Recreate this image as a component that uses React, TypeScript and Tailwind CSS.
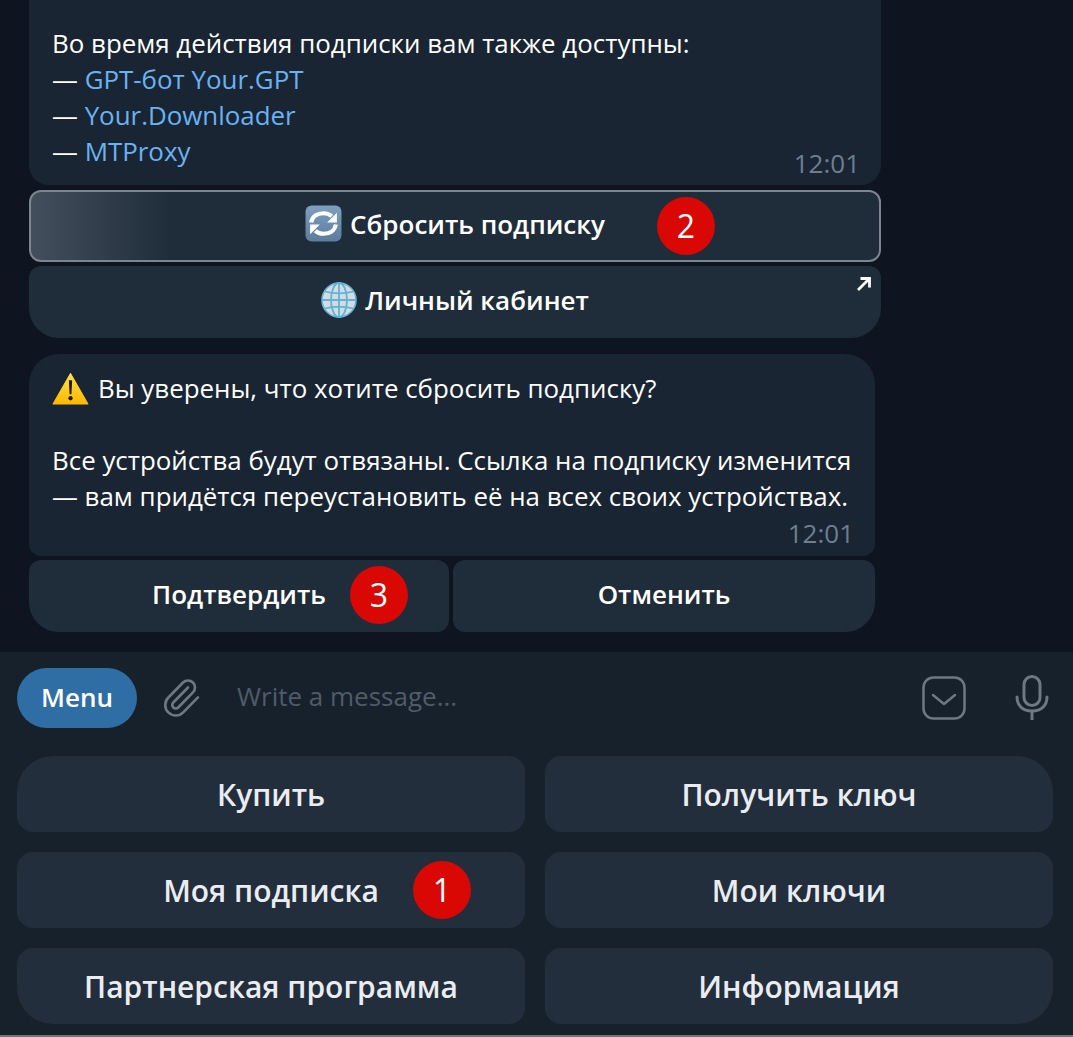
import { Paperclip } from 'lucide-react'

const keyboardRows = [
  ['Купить', 'Получить ключ'],
  ['Моя подписка', 'Мои ключи'],
  ['Партнерская программа', 'Информация'],
]

function Badge({ value, className }: { value: number; className: string }) {
  return (
    <span className={`absolute w-[58px] h-[58px] rounded-full bg-[#d90805] text-white text-[32px] font-normal leading-none flex items-center justify-center ${className}`}>
      {value}
    </span>
  )
}

function RefreshEmoji() {
  return (
    <svg viewBox="0 0 36 36" className="w-[37px] h-[37px] shrink-0">
      <defs>
        <linearGradient id="refreshBg" x1="0" y1="0" x2="0" y2="1">
          <stop offset="0" stopColor="#7f9fbe" />
          <stop offset="1" stopColor="#5a7c9d" />
        </linearGradient>
      </defs>
      <rect x="0.5" y="0.5" width="35" height="35" rx="6" fill="url(#refreshBg)" />
      <path d="M6 17c1-6 6-9 12-9 3 0 6 1 8 3" fill="none" stroke="#fff" strokeWidth="4" />
      <path d="M31 7.500v9.500h-9.500z" fill="#fff" />
      <path d="M30 19c-1 6-6 9-12 9-3 0-6-1-8-3" fill="none" stroke="#fff" strokeWidth="4" />
      <path d="M5 28.500v-9.500h9.500z" fill="#fff" />
    </svg>
  )
}

function GlobeEmoji() {
  return (
    <svg viewBox="0 0 36 36" className="w-[36px] h-[36px] shrink-0">
      <circle cx="18" cy="18" r="17" fill="#d5dbe0" stroke="#62b3d6" strokeWidth="1.6" />
      <g fill="none" stroke="#5db4d8" strokeWidth="1.8">
        <ellipse cx="18" cy="18" rx="8" ry="17" />
        <path d="M18 1v34M1.500 18h33M4 9.500c8 2.500 20 2.500 28 0M4 26.500c8-2.500 20-2.500 28 0" />
      </g>
    </svg>
  )
}

function WarningEmoji() {
  return (
    <svg viewBox="0 0 36 32" className="w-[37px] h-[33px] shrink-0 mr-[9px]">
      <defs>
        <linearGradient id="warnBg" x1="0" y1="0" x2="0" y2="1">
          <stop offset="0" stopColor="#ffe04a" />
          <stop offset="1" stopColor="#fdb900" />
        </linearGradient>
      </defs>
      <path d="M18 1.500 35 31H1z" fill="url(#warnBg)" stroke="url(#warnBg)" strokeLinejoin="round" />
      <path d="M16.400 8h3.200l-.7 13.500h-1.800z" fill="#1b1b1b" />
      <circle cx="18" cy="25.500" r="2.100" fill="#1b1b1b" />
    </svg>
  )
}

function InlineButton({ children, className }: { children: React.ReactNode; className: string }) {
  return (
    <div className={`relative h-[72px] bg-[#1f2c3a] text-white text-[26px] font-semibold flex items-center justify-center gap-[8px] pb-[5px] ${className}`}>
      {children}
    </div>
  )
}

export default function App() {
  return (
    <div className="h-[1037px] w-[1073px] overflow-hidden flex flex-col bg-[#0e1520] text-white font-['Open_Sans',sans-serif]">
      {/* Messages */}
      <div className="relative h-[652px] shrink-0 pl-[29px] text-[25.900px] leading-[36px]">
        <div className="relative w-[852px] h-[185px] pt-[25px] pl-[23px] bg-[#192532] rounded-b-[20px]">
          <p>Во время действия подписки вам также доступны:</p>
          <p>— <span className="text-[#6ab2f2]">GPT-бот Your.GPT</span></p>
          <p>— <span className="text-[#6ab2f2]">Your.Downloader</span></p>
          <p>— <span className="text-[#6ab2f2]">MTProxy</span></p>
          <span className="absolute right-[21px] top-[145px] text-[26px] text-[#6d7f8f]">12:01</span>
        </div>

        <div className="w-[852px] mt-[5px] flex flex-col gap-[4px]">
          <InlineButton className="rounded-[12px] border-2 border-[#7d858e] bg-[linear-gradient(90deg,#434f5c_0px,#1f2c3a_140px)]">
            <RefreshEmoji />
            <span>Сбросить подписку</span>
            <Badge value={2} className="left-[626px] top-[5px]" />
          </InlineButton>
          <InlineButton className="rounded-t-[12px] rounded-b-[30px]">
            <GlobeEmoji />
            <span>Личный кабинет</span>
            <svg viewBox="0 0 14 14" className="absolute right-[10px] top-[11px] w-[14px] h-[14px]" fill="none" stroke="#fff" strokeWidth="2.800">
              <path d="M1 13 12 2M3.500 1.500H12.500V10.500" />
            </svg>
          </InlineButton>
        </div>

        <div className="relative w-[846px] h-[202px] mt-[16px] pt-[16px] pl-[23px] bg-[#192532] rounded-t-[30px] rounded-b-[12px]">
          <p className="flex items-center"><WarningEmoji />Вы уверены, что хотите сбросить подписку?</p>
          <p className="h-[36px]" />
          <p>Все устройства будут отвязаны. Ссылка на подписку изменится</p>
          <p>— вам придётся переустановить её на всех своих устройствах.</p>
          <span className="absolute right-[21px] top-[161px] text-[26px] text-[#6d7f8f]">12:01</span>
        </div>

        <div className="w-[846px] mt-[4px] flex gap-[4px]">
          <InlineButton className="w-[420px] rounded-tl-[12px] rounded-tr-[12px] rounded-br-[12px] rounded-bl-[30px]">
            <span>Подтвердить</span>
            <Badge value={3} className="left-[321px] top-[6px]" />
          </InlineButton>
          <InlineButton className="flex-1 rounded-tl-[12px] rounded-tr-[12px] rounded-bl-[12px] rounded-br-[30px]">
            Отменить
          </InlineButton>
        </div>
      </div>

      {/* Input bar */}
      <div className="h-[88px] shrink-0 bg-[#17212b] flex items-center pl-[17px] pr-[24px] pt-[4px]">
        <div className="w-[120px] h-[60px] rounded-full bg-[#2f6ea5] text-[26px] font-semibold flex items-center justify-center pb-[1px]">Menu</div>
        <Paperclip className="ml-[23px] w-[42px] h-[42px] text-[#6d7883]" strokeWidth={1.5} />
        <span className="ml-[35px] flex-1 text-[26px] text-[#4f5c68] pb-[4px]">Write a message...</span>
        <svg viewBox="0 0 44 44" className="w-[44px] h-[44px]" fill="none" stroke="#6d7883" strokeWidth="2.500">
          <rect x="1.500" y="1.500" width="41" height="41" rx="10" />
          <path d="M11 19 22 28 33 19" strokeLinecap="round" strokeLinejoin="round" />
        </svg>
        <svg viewBox="0 0 34 46" className="ml-[49px] w-[34px] h-[46px]" fill="none" stroke="#6d7883" strokeWidth="3">
          <rect x="9" y="1.500" width="16" height="29" rx="8" />
          <path d="M2 22c0 9 6 14 15 14s15-5 15-14" strokeLinecap="round" />
          <path d="M17 36v9" />
        </svg>
      </div>

      {/* Bot keyboard */}
      <div className="flex-1 bg-[#17212b] border-b-2 border-[#6f7478] pl-[17px] pt-[16px] flex flex-col gap-[20px]">
        {keyboardRows.map((row, rowIndex) => (
          <div key={rowIndex} className="grid grid-cols-[508px_508px] gap-[20px]">
            {row.map((label, colIndex) => (
              <div
                key={label}
                className={`relative h-[76px] rounded-[16px] bg-[#232e3c] text-[#e9edf1] text-[30px] font-semibold flex items-center justify-center ${
                  rowIndex === 0 && colIndex === 1 ? 'rounded-tr-[36px]' : ''
                } ${rowIndex === 0 && colIndex === 0 ? 'rounded-tl-[36px]' : ''} ${
                  rowIndex === 2 && colIndex === 1 ? 'rounded-br-[36px]' : ''
                } ${rowIndex === 2 && colIndex === 0 ? 'rounded-bl-[36px]' : ''}`}
              >
                {label}
                {rowIndex === 1 && colIndex === 0 && <Badge value={1} className="left-[396px] top-[9px]" />}
              </div>
            ))}
          </div>
        ))}
      </div>
    </div>
  )
}
